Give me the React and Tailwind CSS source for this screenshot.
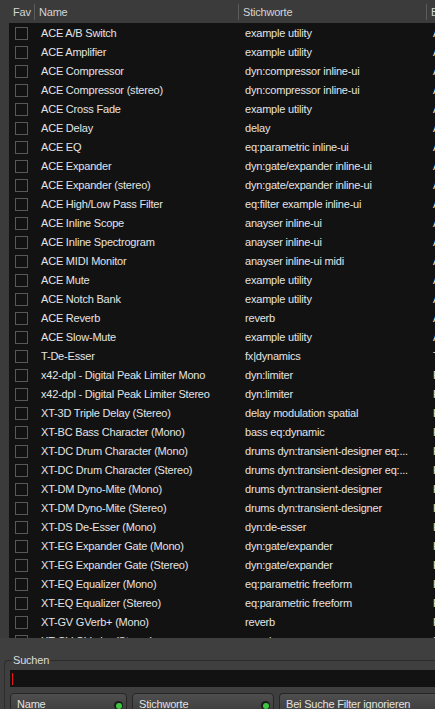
import { useState } from 'react';

const plugins = [
    ['ACE A/B Switch', 'example utility', 'Ardour Community'],
    ['ACE Amplifier', 'example utility', 'Ardour Community'],
    ['ACE Compressor', 'dyn:compressor inline-ui', 'Ardour Community'],
    ['ACE Compressor (stereo)', 'dyn:compressor inline-ui', 'Ardour Community'],
    ['ACE Cross Fade', 'example utility', 'Ardour Community'],
    ['ACE Delay', 'delay', 'Ardour Community'],
    ['ACE EQ', 'eq:parametric inline-ui', 'Ardour Community'],
    ['ACE Expander', 'dyn:gate/expander inline-ui', 'Ardour Community'],
    ['ACE Expander (stereo)', 'dyn:gate/expander inline-ui', 'Ardour Community'],
    ['ACE High/Low Pass Filter', 'eq:filter example inline-ui', 'Ardour Community'],
    ['ACE Inline Scope', 'anayser inline-ui', 'Ardour Community'],
    ['ACE Inline Spectrogram', 'anayser inline-ui', 'Ardour Community'],
    ['ACE MIDI Monitor', 'anayser inline-ui midi', 'Ardour Community'],
    ['ACE Mute', 'example utility', 'Ardour Community'],
    ['ACE Notch Bank', 'example utility', 'Ardour Community'],
    ['ACE Reverb', 'reverb', 'Ardour Community'],
    ['ACE Slow-Mute', 'example utility', 'Ardour Community'],
    ['T-De-Esser', 'fx|dynamics', 'Tom Szilagyi'],
    ['x42-dpl - Digital Peak Limiter Mono', 'dyn:limiter', 'Robin Gareus'],
    ['x42-dpl - Digital Peak Limiter Stereo', 'dyn:limiter', 'Robin Gareus'],
    ['XT-3D Triple Delay (Stereo)', 'delay modulation spatial', 'Harrison Consoles'],
    ['XT-BC Bass Character (Mono)', 'bass eq:dynamic', 'Harrison Consoles'],
    ['XT-DC Drum Character (Mono)', 'drums dyn:transient-designer eq:...', 'Harrison Consoles'],
    ['XT-DC Drum Character (Stereo)', 'drums dyn:transient-designer eq:...', 'Harrison Consoles'],
    ['XT-DM Dyno-Mite (Mono)', 'drums dyn:transient-designer', 'Harrison Consoles'],
    ['XT-DM Dyno-Mite (Stereo)', 'drums dyn:transient-designer', 'Harrison Consoles'],
    ['XT-DS De-Esser (Mono)', 'dyn:de-esser', 'Harrison Consoles'],
    ['XT-EG Expander Gate (Mono)', 'dyn:gate/expander', 'Harrison Consoles'],
    ['XT-EG Expander Gate (Stereo)', 'dyn:gate/expander', 'Harrison Consoles'],
    ['XT-EQ Equalizer (Mono)', 'eq:parametric freeform', 'Harrison Consoles'],
    ['XT-EQ Equalizer (Stereo)', 'eq:parametric freeform', 'Harrison Consoles'],
    ['XT-GV GVerb+ (Mono)', 'reverb', 'Harrison Consoles'],
    ['XT-GV GVerb+ (Stereo)', 'reverb', 'Harrison Consoles'],
];

function HeaderCell({ label, className }) {
    return (
        <div className={`flex h-full items-center overflow-hidden whitespace-nowrap pl-[4px] ${className}`}>
            {label}
        </div>
    );
}

function Separator() {
    return <div className="h-[16px] w-px shrink-0 bg-[#5c5c5c]" />;
}

function ToggleButton({ label, className }) {
    return (
        <div
            className={`flex h-[22px] items-start justify-between rounded-[4px] border border-[#262626] bg-gradient-to-b from-[#4e4e4e] to-[#3c3c3c] pl-[6px] pr-[3px] pt-[3px] ${className}`}
        >
            <span className="leading-[14px] text-[#e2e2e2]">{label}</span>
            <span className="mt-[4px] flex h-[9px] w-[9px] items-center justify-center rounded-full bg-[#1c1c1c]">
                <span className="h-[6px] w-[6px] rounded-full bg-[#3fc63f]" />
            </span>
        </div>
    );
}

export default function App() {
    const [favs, setFavs] = useState({});

    return (
        <div
            className="flex h-[709px] w-[435px] flex-col overflow-hidden bg-[#3f3f3f] text-[11px] tracking-[-0.2px] text-[#e4e4e4]"
            style={{ fontFamily: '"Liberation Sans", Arial, sans-serif' }}
        >
            {/* column header */}
            <div className="flex h-[23px] shrink-0 items-center bg-[#3b3b3b] pt-[1px] text-[#d4d4d4]">
                <div className="w-[9px] shrink-0" />
                <HeaderCell label="Fav" className="w-[25px] shrink-0" />
                <Separator />
                <HeaderCell label="Name" className="w-[203px] shrink-0" />
                <Separator />
                <HeaderCell label="Stichworte" className="w-[187px] shrink-0" />
                <Separator />
                <HeaderCell label="Bereitsteller" className="min-w-0 flex-1" />
            </div>

            {/* plugin list */}
            <div className="flex h-[615px] shrink-0 bg-[#3b3b3b] pl-[9px]">
                <div className="min-w-0 flex-1 overflow-hidden bg-[#121212] pt-[1px]">
                    {plugins.map(([name, tags, author], index) => (
                        <div key={name} className="flex h-[19px] items-center leading-[19px]">
                            <div className="flex w-[26px] shrink-0 justify-start pl-[6px]">
                                <button
                                    type="button"
                                    onClick={() =>
                                        setFavs((previous) => ({
                                            ...previous,
                                            [index]: !previous[index],
                                        }))
                                    }
                                    className="flex h-[13px] w-[13px] items-center justify-center border border-[#585858] bg-[#121212] text-[9px] leading-none"
                                >
                                    {favs[index] ? '✓' : ''}
                                </button>
                            </div>
                            <div className="w-[204px] shrink-0 overflow-hidden whitespace-nowrap pl-[6px]">
                                {name}
                            </div>
                            <div className="w-[188px] shrink-0 overflow-hidden whitespace-nowrap pl-[6px]">
                                {tags}
                            </div>
                            <div className="min-w-0 flex-1 overflow-hidden whitespace-nowrap pl-[6px]">
                                {author}
                            </div>
                        </div>
                    ))}
                </div>
            </div>

            {/* search panel */}
            <div className="flex-1 pl-[4px] pt-[16px]">
                <fieldset className="rounded-tl-[4px] border-l border-t border-[#2c2c2c] pl-[5px] pt-[3px]">
                    <legend className="ml-[2px] px-[1px] leading-[13px] text-[#dcdcdc]">Suchen</legend>
                    <div className="flex h-[17px] items-center bg-[#121212] pl-[2px]">
                        <span className="h-[12px] w-[1px] bg-[#e01818]" />
                    </div>
                    <div className="mt-[6px] flex gap-[5px]">
                        <ToggleButton label="Name" className="w-[117px] shrink-0" />
                        <ToggleButton label="Stichworte" className="w-[142px] shrink-0" />
                        <div className="h-[22px] min-w-0 flex-1 overflow-hidden whitespace-nowrap rounded-l-[4px] border border-r-0 border-[#262626] bg-gradient-to-b from-[#4e4e4e] to-[#3c3c3c] pl-[6px] pt-[3px] leading-[14px] text-[#e2e2e2]">
                            Bei Suche Filter ignorieren
                        </div>
                    </div>
                </fieldset>
            </div>
        </div>
    );
}
